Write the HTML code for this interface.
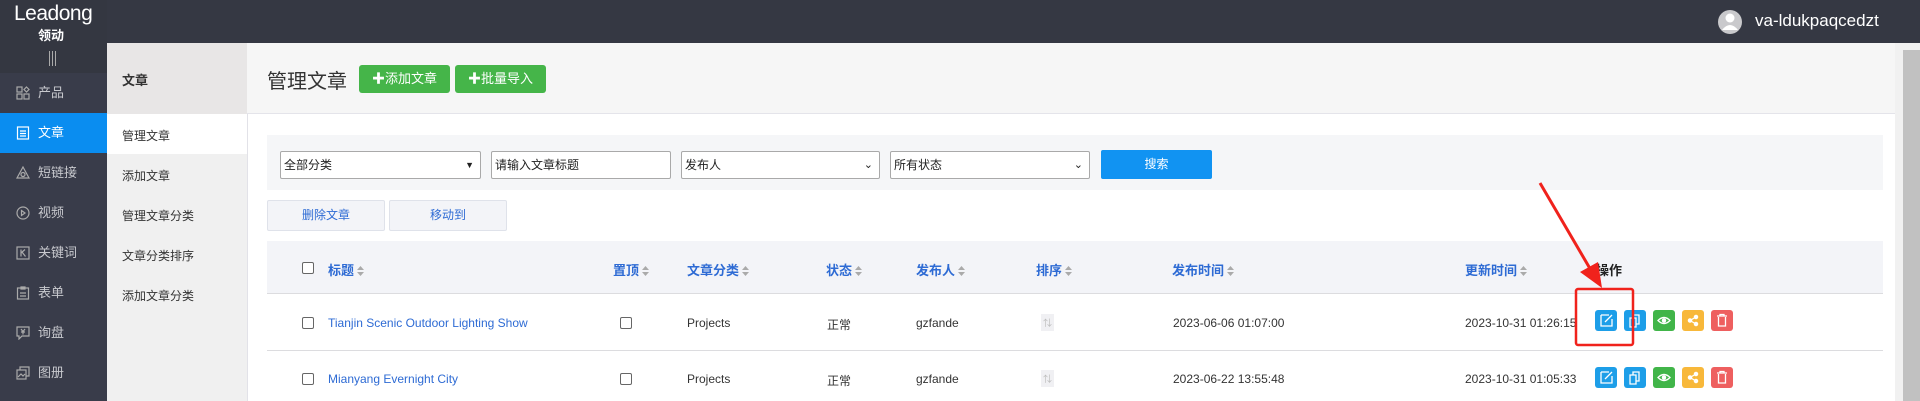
<!DOCTYPE html>
<html><head><meta charset="utf-8"><style>
*{margin:0;padding:0;box-sizing:border-box}
body{width:1920px;height:401px;overflow:hidden;position:relative;background:#fff;font-family:"Liberation Sans","Noto Sans CJK SC",sans-serif;font-size:13px;color:#333}
.a{position:absolute}
.top{left:0;top:0;width:1920px;height:43px;background:#353843}
.side{left:0;top:0;width:107px;height:401px;background:#393c4a}
.logo{left:0;top:0;width:107px;height:73px;background:#343741}
.si{position:absolute;left:0;width:107px;height:40px;color:#c8c9ce;font-size:13px;line-height:40px;padding-left:38px}
.si svg{position:absolute;left:16px;top:13px}
.col2{left:107px;top:43px;width:140px;height:358px;background:#f0f0f0}
.c2i{position:absolute;left:15px;font-size:12px;color:#333}
.main{left:247px;top:43px;width:1648px;height:71px;background:#f6f6f6;border-bottom:1px solid #e4e4ea}
.gbtn{position:absolute;top:65px;height:28px;background:#45b549;border-radius:3px;color:#fff;font-size:13px;line-height:28px;text-align:center}
.sel{position:absolute;top:151px;height:28px;background:#fff;border:1px solid #a9a9a9;border-radius:2px;font-size:12px;line-height:26px;padding-left:3px;color:#222}
.th{position:absolute;top:260px;font-size:13px;color:#2e6bd4;font-weight:bold}
.sort{display:inline-block;width:7px;margin-left:3px;vertical-align:middle;position:relative;top:-1px}
.cb{position:absolute;width:12px;height:12px;border:1px solid #666;border-radius:2px;background:#fff}
.td{position:absolute;font-size:12px;color:#333}
.ab{position:absolute;width:22px;height:21px;border-radius:3px}
</style></head><body>
<div class="a top"></div>
<div class="a side"></div>
<div class="a logo"></div>
<div class="a" style="left:14px;top:2px;color:#fff;font-size:21px;letter-spacing:-0.5px">Leadong</div>
<div class="a" style="left:38px;top:25px;color:#fff;font-size:13px;font-weight:bold">领动</div>
<div class="a" style="left:49px;top:51px;width:1px;height:15px;background:#aaa;box-shadow:3px 0 0 #aaa,6px 0 0 #aaa"></div>

<div class="si" style="top:73px"><svg width="14" height="14" viewBox="0 0 14 14" fill="none" stroke="#aaa" stroke-width="1.2"><rect x="1" y="1" width="5" height="5"/><rect x="1" y="8" width="5" height="5"/><rect x="8" y="8" width="5" height="5"/><path d="M10.5 1l2.5 2.5-2.5 2.5-2.5-2.5z"/></svg>产品</div>
<div class="si" style="top:113px;background:#0a8df0;color:#fff"><svg width="14" height="14" viewBox="0 0 14 14" fill="none" stroke="#fff" stroke-width="1.2"><rect x="1.5" y="1" width="11" height="12"/><path d="M4 5h6M4 7.5h6M4 10h6"/></svg>文章</div>
<div class="si" style="top:153px"><svg width="14" height="14" viewBox="0 0 14 14" fill="none" stroke="#aaa" stroke-width="1.2"><path d="M7 1l6 11H1z"/><circle cx="7" cy="8.5" r="2"/></svg>短链接</div>
<div class="si" style="top:193px"><svg width="14" height="14" viewBox="0 0 14 14" fill="none" stroke="#aaa" stroke-width="1.2"><circle cx="7" cy="7" r="6"/><path d="M5.5 4.5l3.5 2.5-3.5 2.5z"/></svg>视频</div>
<div class="si" style="top:233px"><svg width="14" height="14" viewBox="0 0 14 14" fill="none" stroke="#aaa" stroke-width="1.2"><rect x="1" y="1" width="12" height="12"/><path d="M5 3.5v7M5 7l4-3.5M6 6l3.5 4.5"/></svg>关键词</div>
<div class="si" style="top:273px"><svg width="14" height="14" viewBox="0 0 14 14" fill="none" stroke="#aaa" stroke-width="1.2"><rect x="1.5" y="2" width="11" height="11"/><path d="M5 1h4v2H5zM4 7h6M4 10h6"/></svg>表单</div>
<div class="si" style="top:313px"><svg width="14" height="14" viewBox="0 0 14 14" fill="none" stroke="#aaa" stroke-width="1.2"><path d="M1 1h12v9H6l-3 3v-3H1z"/><path d="M5 3l2 2.5 2-2.5M7 5.5v3M5 6h4"/></svg>询盘</div>
<div class="si" style="top:353px"><svg width="14" height="14" viewBox="0 0 14 14" fill="none" stroke="#aaa" stroke-width="1.2"><rect x="1" y="4" width="9" height="9"/><path d="M4 4V1h9v9h-3M2 11l3-3 2 2 2-2"/></svg>图册</div>

<div class="a col2"></div>
<div class="a" style="left:107px;top:43px;width:140px;height:71px;background:#e8e6e6"></div>
<div class="c2i" style="left:122px;top:70px;font-weight:bold;font-size:13px">文章</div>
<div class="a" style="left:107px;top:114px;width:140px;height:40px;background:#fff"></div>
<div class="c2i" style="left:122px;top:127px">管理文章</div>
<div class="c2i" style="left:122px;top:167px">添加文章</div>
<div class="c2i" style="left:122px;top:207px">管理文章分类</div>
<div class="c2i" style="left:122px;top:247px">文章分类排序</div>
<div class="c2i" style="left:122px;top:287px">添加文章分类</div>
<div class="a" style="left:247px;top:43px;width:1px;height:358px;background:#e2e2e8"></div>

<div class="a main"></div>
<div class="a" style="left:267px;top:65px;font-size:20px;color:#333">管理文章</div>
<div class="gbtn" style="left:359px;width:91px"><b>✚</b>添加文章</div>
<div class="gbtn" style="left:455px;width:91px"><b>✚</b>批量导入</div>

<div class="a" style="left:267px;top:135px;width:1616px;height:55px;background:#f5f6f8"></div>
<div class="sel" style="left:280px;width:201px">全部分类<span style="position:absolute;right:6px;font-size:9px">▼</span></div>
<div class="sel" style="left:491px;width:180px">请输入文章标题</div>
<div class="sel" style="left:681px;width:199px">发布人<span style="position:absolute;right:6px;font-size:11px">⌄</span></div>
<div class="sel" style="left:890px;width:200px">所有状态<span style="position:absolute;right:6px;font-size:11px">⌄</span></div>
<div class="a" style="left:1101px;top:150px;width:111px;height:29px;background:#1193f2;border-radius:2px;color:#fff;font-size:12px;line-height:29px;text-align:center">搜索</div>

<div class="a" style="left:267px;top:200px;width:118px;height:31px;background:#f3f4f8;border:1px solid #dfe2ea;border-radius:2px;color:#2e6bd4;font-size:12px;line-height:29px;text-align:center">删除文章</div>
<div class="a" style="left:389px;top:200px;width:118px;height:31px;background:#f3f4f8;border:1px solid #dfe2ea;border-radius:2px;color:#2e6bd4;font-size:12px;line-height:29px;text-align:center">移动到</div>

<div class="a" style="left:267px;top:241px;width:1616px;height:53px;background:#f3f4f8;border-bottom:1px solid #dcdcdf"></div>
<div class="cb" style="left:302px;top:262px"></div>
<div class="th" style="left:328px">标题<svg class="sort" viewBox="0 0 7 10" height="10"><path d="M0 4L3.5 0 7 4zM0 6h7l-3.5 4z" fill="#aaa"/></svg></div>
<div class="th" style="left:613px">置顶<svg class="sort" viewBox="0 0 7 10" height="10"><path d="M0 4L3.5 0 7 4zM0 6h7l-3.5 4z" fill="#aaa"/></svg></div>
<div class="th" style="left:687px">文章分类<svg class="sort" viewBox="0 0 7 10" height="10"><path d="M0 4L3.5 0 7 4zM0 6h7l-3.5 4z" fill="#aaa"/></svg></div>
<div class="th" style="left:826px">状态<svg class="sort" viewBox="0 0 7 10" height="10"><path d="M0 4L3.5 0 7 4zM0 6h7l-3.5 4z" fill="#aaa"/></svg></div>
<div class="th" style="left:916px">发布人<svg class="sort" viewBox="0 0 7 10" height="10"><path d="M0 4L3.5 0 7 4zM0 6h7l-3.5 4z" fill="#aaa"/></svg></div>
<div class="th" style="left:1036px">排序<svg class="sort" viewBox="0 0 7 10" height="10"><path d="M0 4L3.5 0 7 4zM0 6h7l-3.5 4z" fill="#aaa"/></svg></div>
<div class="th" style="left:1172px">发布时间<svg class="sort" viewBox="0 0 7 10" height="10"><path d="M0 4L3.5 0 7 4zM0 6h7l-3.5 4z" fill="#aaa"/></svg></div>
<div class="th" style="left:1465px">更新时间<svg class="sort" viewBox="0 0 7 10" height="10"><path d="M0 4L3.5 0 7 4zM0 6h7l-3.5 4z" fill="#aaa"/></svg></div>
<div class="th" style="left:1596px;color:#222">操作</div>

<div class="a" style="left:267px;top:350px;width:1616px;height:1px;background:#dcdcdf"></div>

<div class="cb" style="left:302px;top:317px"></div>
<div class="td" style="left:328px;top:316px;color:#2e6bd4">Tianjin Scenic Outdoor Lighting Show</div>
<div class="cb" style="left:620px;top:317px"></div>
<div class="td" style="left:687px;top:316px">Projects</div>
<div class="td" style="left:827px;top:316px">正常</div>
<div class="td" style="left:916px;top:316px">gzfande</div>
<div class="td" style="left:1041px;top:314px;font-size:9px;color:#bbb;background:#f0f0f3;padding:2px">⇅</div>
<div class="td" style="left:1173px;top:316px">2023-06-06 01:07:00</div>
<div class="td" style="left:1465px;top:316px">2023-10-31 01:26:15</div>

<div class="cb" style="left:302px;top:373px"></div>
<div class="td" style="left:328px;top:372px;color:#2e6bd4">Mianyang Evernight City</div>
<div class="cb" style="left:620px;top:373px"></div>
<div class="td" style="left:687px;top:372px">Projects</div>
<div class="td" style="left:827px;top:372px">正常</div>
<div class="td" style="left:916px;top:372px">gzfande</div>
<div class="td" style="left:1041px;top:370px;font-size:9px;color:#bbb;background:#f0f0f3;padding:2px">⇅</div>
<div class="td" style="left:1173px;top:372px">2023-06-22 13:55:48</div>
<div class="td" style="left:1465px;top:372px">2023-10-31 01:05:33</div>

<div class="ab" style="left:1595px;top:310px;background:#1d9ee8"></div>
<div class="ab" style="left:1624px;top:310px;background:#1d9ee8"></div>
<div class="ab" style="left:1653px;top:310px;background:#41b549"></div>
<div class="ab" style="left:1682px;top:310px;background:#f8b83a"></div>
<div class="ab" style="left:1711px;top:310px;background:#ee5f5f"></div>
<div class="ab" style="left:1595px;top:367px;background:#1d9ee8"></div>
<div class="ab" style="left:1624px;top:367px;background:#1d9ee8"></div>
<div class="ab" style="left:1653px;top:367px;background:#41b549"></div>
<div class="ab" style="left:1682px;top:367px;background:#f8b83a"></div>
<div class="ab" style="left:1711px;top:367px;background:#ee5f5f"></div>
<svg class="a" style="left:0;top:0" width="1920" height="401">
<g id="ic" fill="none" stroke="#fff" stroke-width="1.3">
<path d="M1601 315h8M1601 315v11h11v-7M1605 322l7-7"/>
<path d="M1630 318h6v9h-6zM1633 318v-3h6v9h-3"/>
<path d="M1658 320.5q6-6 12 0q-6 6-12 0z"/><circle cx="1664" cy="320.5" r="1.6" fill="#fff"/>
<circle cx="1690" cy="320.5" r="1.6" fill="#fff"/><circle cx="1696" cy="317" r="1.6" fill="#fff"/><circle cx="1696" cy="324" r="1.6" fill="#fff"/><path d="M1690 320.5l6-3.5M1690 320.5l6 3.5"/>
<path d="M1717 316h10M1720 316v-1.5h4v1.5M1718.5 317v9h7v-9"/>
</g>
<use href="#ic" y="57"/>
<rect x="1576" y="289" width="57" height="56" fill="none" stroke="#f0221c" stroke-width="2.5" rx="2"/>
<path d="M1540 183L1592 272" stroke="#f0221c" stroke-width="3"/>
<path d="M1580 272l22 16-4-26z" fill="#f0221c"/>
<circle cx="1730" cy="22" r="12" fill="#c9c9cc"/>
<circle cx="1730" cy="18" r="4.5" fill="#fff"/>
<path d="M1722 30q8-10 16 0z" fill="#fff"/>
</svg>
<div class="a" style="left:1755px;top:11px;color:#fff;font-size:17px">va-ldukpaqcedzt</div>
<div class="a" style="left:1895px;top:43px;width:25px;height:358px;background:#f1f1f1"></div>
<div class="a" style="left:1903px;top:50px;width:17px;height:351px;background:#c1c1c1"></div>
</body></html>
